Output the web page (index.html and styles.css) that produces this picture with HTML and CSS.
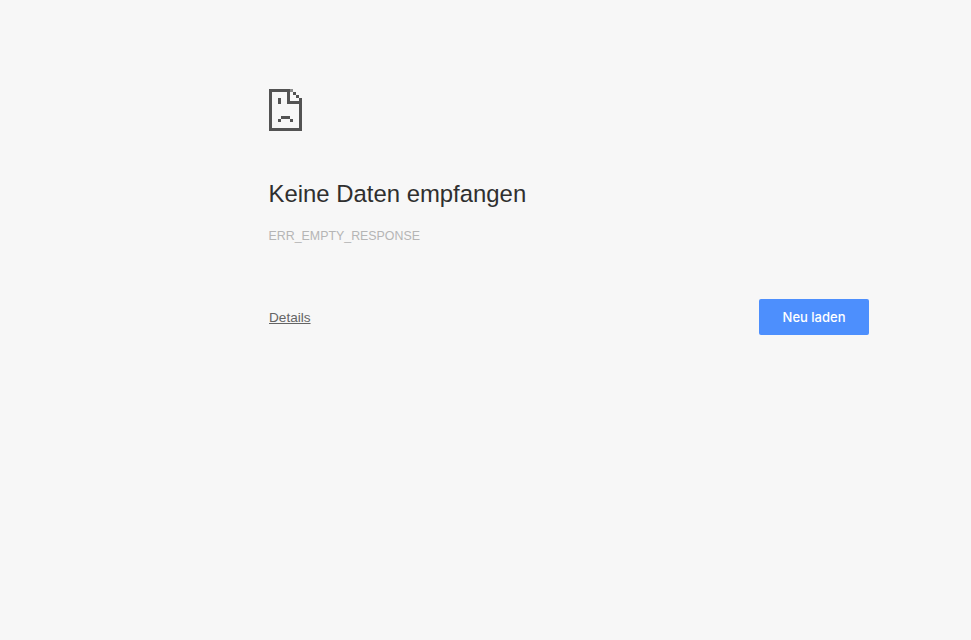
FILE: index.html
```html
<!DOCTYPE html>
<html lang="de">
<head>
<meta charset="utf-8">
<title>Keine Daten empfangen</title>
<link rel="stylesheet" href="styles.css">
</head>
<body>
<main class="wrapper">
  <svg class="icon" width="33" height="42" viewBox="0 0 11 14" shape-rendering="crispEdges" aria-hidden="true">
    <path fill="#535353" d="M0 0H7V1H0ZM0 0H1V14H0ZM0 13H11V14H0ZM10 3H11V14H10ZM6 0H7V5H6ZM6 4H11V5H6ZM8 1H9V2H8ZM9 2H10V3H9ZM3 3H4V5H3ZM4 9H7V10H4ZM3 10H4V11H3ZM7 10H8V11H7Z"/>
    <rect class="icon-soft" x="7" y="0" width="1" height="1"/>
  </svg>
  <h1 class="title">Keine Daten empfangen</h1>
  <div class="code">ERR_EMPTY_RESPONSE</div>
  <div class="actions">
    <a class="details" href="#">Details</a>
    <button class="reload" type="button">Neu laden</button>
  </div>
</main>
</body>
</html>
```
FILE: styles.css
```css
html, body { margin: 0; height: 100%; }
body {
  background: #f7f7f7;
  font-family: "Liberation Sans", Arial, sans-serif;
  color: #646464;
}
.wrapper {
  width: 600px;
  margin: 0 0 0 269px;
  padding-top: 89px;
  box-sizing: border-box;
}
.icon { display: block; }
.icon-soft { fill: #8c8c8c; }
.title {
  margin: 48px 0 0 -0.5px;
  font-size: 23.9px;
  line-height: 30px;
  font-weight: 400;
  color: #2f2f2f;
}
.code {
  margin: 19px 0 0 -0.5px;
  font-size: 12.4px;
  line-height: 16px;
  color: #b5b5b5;
}
.actions {
  margin-top: 55px;
  display: flex;
  justify-content: space-between;
  align-items: center;
}
.details {
  font-size: 13.6px;
  color: #646464;
  text-decoration: underline;
}
.reload {
  width: 110px;
  height: 36px;
  border: 0;
  border-radius: 2px;
  background: #4d8ffd;
  color: #fff;
  font-family: Inter, "Liberation Sans", sans-serif;
  font-size: 13px;
  font-weight: 500;
  padding: 0;
}
```
